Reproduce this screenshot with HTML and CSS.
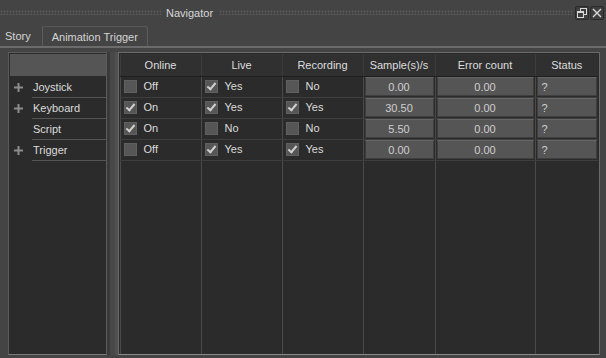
FILE: index.html
```html
<!DOCTYPE html>
<html lang="en">
<head>
    <meta charset="UTF-8">
    <title>Navigator</title>
    <link rel="stylesheet" href="styles.css">
</head>
<body>
    <div class="titlebar">
        <div class="grip grip-left"></div>
        <span class="title">Navigator</span>
        <div class="grip"></div>
        <div class="winbtns">
            <span class="winbtn">
                <svg width="10" height="10" viewBox="0 0 10 10"><rect x="3.5" y="0.5" width="6" height="6" fill="none" stroke="#d8d8d8"/><rect x="0.5" y="3.5" width="6" height="6" fill="#3e3e3e" stroke="#d8d8d8"/><line x1="0.5" y1="4.5" x2="6.5" y2="4.5" stroke="#d8d8d8"/></svg>
            </span>
            <span class="winbtn">
                <svg width="10" height="10" viewBox="0 0 10 10"><path d="M1 1 L9 9 M9 1 L1 9" stroke="#d8d8d8" stroke-width="1.4"/></svg>
            </span>
        </div>
    </div>

    <div class="tabs">
        <div class="tab">Story</div>
        <div class="tab active">Animation Trigger</div>
    </div>

    <div class="content">
        <div class="tree">
            <div class="tree-head"></div>
            <div class="tree-row"><span class="plus"><svg width="9" height="9" viewBox="0 0 9 9"><path d="M0 4.5 H9 M4.5 0 V9" stroke="#8c8c8c" stroke-width="2"/></svg></span><span class="tree-label">Joystick</span></div>
            <div class="tree-row"><span class="plus"><svg width="9" height="9" viewBox="0 0 9 9"><path d="M0 4.5 H9 M4.5 0 V9" stroke="#8c8c8c" stroke-width="2"/></svg></span><span class="tree-label">Keyboard</span></div>
            <div class="tree-row"><span class="plus"></span><span class="tree-label">Script</span></div>
            <div class="tree-row"><span class="plus"><svg width="9" height="9" viewBox="0 0 9 9"><path d="M0 4.5 H9 M4.5 0 V9" stroke="#8c8c8c" stroke-width="2"/></svg></span><span class="tree-label">Trigger</span></div>
        </div>
        <div class="splitter"></div>
        <div class="grid">
            <table>
                <colgroup>
                    <col class="c-online"><col class="c-live"><col class="c-rec"><col class="c-sample"><col class="c-err"><col class="c-status">
                </colgroup>
                <thead>
                    <tr><th>Online</th><th>Live</th><th>Recording</th><th>Sample(s)/s</th><th>Error count</th><th>Status</th></tr>
                </thead>
                <tbody>
                    <tr>
                        <td><span class="cb"></span>Off</td>
                        <td><span class="cb on"></span>Yes</td>
                        <td><span class="cb"></span>No</td>
                        <td><div class="val">0.00</div></td>
                        <td><div class="val">0.00</div></td>
                        <td><div class="val left">?</div></td>
                    </tr>
                    <tr>
                        <td><span class="cb on"></span>On</td>
                        <td><span class="cb on"></span>Yes</td>
                        <td><span class="cb on"></span>Yes</td>
                        <td><div class="val">30.50</div></td>
                        <td><div class="val">0.00</div></td>
                        <td><div class="val left">?</div></td>
                    </tr>
                    <tr>
                        <td><span class="cb on"></span>On</td>
                        <td><span class="cb"></span>No</td>
                        <td><span class="cb"></span>No</td>
                        <td><div class="val">5.50</div></td>
                        <td><div class="val">0.00</div></td>
                        <td><div class="val left">?</div></td>
                    </tr>
                    <tr>
                        <td><span class="cb"></span>Off</td>
                        <td><span class="cb on"></span>Yes</td>
                        <td><span class="cb on"></span>Yes</td>
                        <td><div class="val">0.00</div></td>
                        <td><div class="val">0.00</div></td>
                        <td><div class="val left">?</div></td>
                    </tr>
                    <tr class="filler">
                        <td></td><td></td><td></td><td></td><td></td><td></td>
                    </tr>
                </tbody>
            </table>
        </div>
    </div>
</body>
</html>
```

FILE: styles.css
```css
* {
    margin: 0;
    padding: 0;
    box-sizing: border-box;
}

html, body {
    width: 606px;
    height: 358px;
    overflow: hidden;
}

body {
    background-color: #444444;
    color: #d6d6d6;
    font-family: "Liberation Sans", Arial, sans-serif;
    font-size: 11px;
    display: flex;
    flex-direction: column;
}

/* title bar */
.titlebar {
    height: 25px;
    display: flex;
    align-items: center;
}
.grip {
    height: 5px;
    flex: 1;
    background-image: radial-gradient(circle, #5e5e5e 0.8px, transparent 1.1px);
    background-size: 3px 3px;
}
.grip-left {
    flex: none;
    width: 161px;
}
.title {
    padding: 0 6px 0 5px;
    color: #d8d8d8;
}
.winbtns {
    display: flex;
    gap: 1px;
    padding: 0 2px 0 2px;
}
.winbtn {
    width: 14px;
    height: 14px;
    border: 1px solid #2a2a2a;
    border-radius: 2px;
    background-color: #3e3e3e;
    display: flex;
    align-items: center;
    justify-content: center;
}

/* tabs */
.tabs {
    height: 23px;
    display: flex;
    align-items: flex-end;
    border-bottom: 2px solid #6b6b6b;
}
.tab {
    height: 20px;
    padding: 0 11px 0 5px;
    line-height: 21px;
    color: #d4d4d4;
    border-right: 1px solid #5c5c5c;
}
.tab.active {
    padding: 0 9px 0 9px;
    border-top: 1px solid #5a5a5a;
    border-radius: 3px 3px 0 0;
}

/* content */
.content {
    flex: 1;
    display: flex;
    padding: 4px 6px 3px 8px;
}

.tree {
    width: 101px;
    background-color: #2b2b2b;
    border: 1px solid #5a5a5a;
    border-bottom-color: #7a7a7a;
    padding: 1px 0 0 1px;
}
.tree-head {
    height: 22px;
    background-color: #555555;
    margin-bottom: 1px;
}
.tree-row {
    height: 21px;
    display: flex;
    align-items: center;
}
.plus {
    width: 22px;
    padding-left: 4px;
    display: flex;
    align-items: center;
}
.tree-label {
    flex: 1;
    height: 21px;
    line-height: 20px;
    padding-left: 1px;
    border-bottom: 1px solid #555555;
    color: #dcdcdc;
}

.splitter {
    width: 11px;
    border-left: 3px solid #3a3a3a;
    border-right: 3px solid #505050;
    background-color: #484848;
}

.grid {
    flex: 1;
    background-color: #2b2b2b;
    border: 1px solid #6a6a6a;
    border-bottom-color: #8a8a8a;
    padding: 1px 1px 0 1px;
    display: flex;
}

table {
    width: 478px;
    height: 100%;
    border-collapse: collapse;
    table-layout: fixed;
}
.c-online, .c-live, .c-rec { width: 81px; }
.c-sample { width: 72px; }
.c-err { width: 100px; }
.c-status { width: 63px; }

th {
    height: 22px;
    background-color: #303030;
    color: #dedede;
    font-weight: normal;
    border-left: 1px solid #3c3c3c;
    border-bottom: 1px solid #1e1e1e;
}

td {
    height: 21px;
    padding: 0 3px;
    border-left: 1px solid #4a4a4a;
    border-bottom: 1px solid #3e3e3e;
    color: #dcdcdc;
    white-space: nowrap;
}
.filler td {
    height: auto;
    border-bottom: none;
}

.cb {
    display: inline-block;
    width: 13px;
    height: 13px;
    background-color: #565656;
    border: 1px solid #606060;
    vertical-align: -3px;
    margin-right: 7px;
    position: relative;
}
.cb.on::after {
    content: "";
    position: absolute;
    left: 3px;
    top: 0px;
    width: 3px;
    height: 7px;
    border-right: 2px solid #d0d0d0;
    border-bottom: 2px solid #d0d0d0;
    transform: rotate(40deg);
}

td .val {
    height: 19px;
    line-height: 18px;
    margin: 0 -2px;
    background-color: #555555;
    border: 1px solid #3f3f3f;
    border-top-color: #666666;
    text-align: center;
    color: #cfcfcf;
}
td .val.left {
    text-align: left;
    padding-left: 4px;
}
```
